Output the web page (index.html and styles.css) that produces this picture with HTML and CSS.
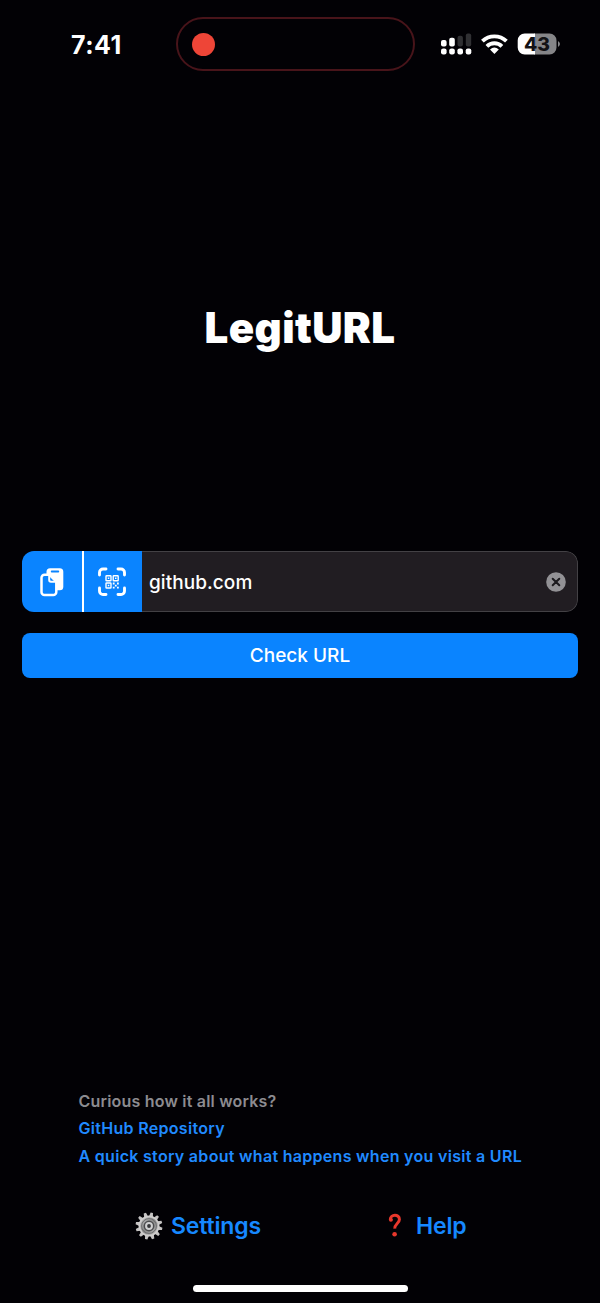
FILE: index.html
```html
<!DOCTYPE html>
<html lang="en">
<head>
<meta charset="utf-8">
<title>LegitURL</title>
<link rel="stylesheet" href="styles.css">
</head>
<body>
<div class="screen">
  <header class="status">
    <div class="time">7:41</div>
    <div class="island"><span class="record"></span></div>
    <svg class="indicators" width="128" height="28" viewBox="0 0 128 28">
      <g fill="#fff">
        <rect x="5" y="10" width="5.6" height="6.4" rx="2"/>
        <rect x="13.2" y="7.8" width="5.6" height="8.6" rx="2"/>
        <rect x="21.5" y="5.8" width="5.4" height="10.6" rx="2" fill="#303033"/>
        <rect x="29.8" y="3.5" width="5.4" height="12.9" rx="2" fill="#303033"/>
        <rect x="5" y="18.4" width="5.6" height="6" rx="2.2"/>
        <rect x="13.2" y="18.4" width="5.6" height="6" rx="2.2"/>
        <rect x="21.4" y="18.4" width="5.6" height="6" rx="2.2"/>
        <rect x="29.7" y="18.4" width="5.6" height="6" rx="2.2"/>
        <path d="M58.400 23.900l-4.400-4.400q4.400-3.800 8.800 0z"/>
      </g>
      <g fill="none" stroke="#fff" stroke-width="3.900">
        <path d="M50.900 16.300a10.800 10.800 0 0 1 15 0"/>
        <path d="M46.400 11.200a17.300 17.300 0 0 1 24 0"/>
      </g>
      <path d="M98 3.500h15.500a7 7 0 0 1 7 7v7a7 7 0 0 1-7 7H98z" fill="#858588"/>
      <path d="M99 3.500H88.700a7 7 0 0 0-7 7v7a7 7 0 0 0 7 7H99z" fill="#fff"/>
      <path d="M122 11q4 3 0 6z" fill="#858588"/>
      <text class="charge" x="88" y="20.500" textLength="26" lengthAdjust="spacingAndGlyphs">43</text>
    </svg>
  </header>
  <h1 class="title">LegitURL</h1>
  <main class="form">
    <div class="field">
      <button class="tool paste" aria-label="Paste">
        <svg width="26" height="30" viewBox="0 0 26 30">
          <rect x="7.500" y="1.200" width="16.800" height="22" rx="3.500" fill="#fff"/>
          <path d="M12.700 4.500h6.600" stroke="#0a84ff" stroke-width="1.800" stroke-linecap="round"/>
          <path d="M5.500 7.700h4.800l7 7v10.300a3 3 0 0 1-3 3H5.500a3 3 0 0 1-3-3V10.700A3 3 0 0 1 5.500 7.700z" fill="#0a84ff" stroke="#fff" stroke-width="2.500"/>
          <path d="M10.200 8v5a1.800 1.800 0 0 0 1.800 1.800h5" fill="none" stroke="#fff" stroke-width="2"/>
        </svg>
      </button>
      <button class="tool scan" aria-label="Scan QR code">
        <svg width="30" height="30" viewBox="0 0 30 30" fill="none" stroke="#fff">
          <path d="M2.500 8V5.500a3.500 3.500 0 0 1 3.500-3.500H9M21 2h3a3.500 3.500 0 0 1 3.500 3.500V8M27.500 21v3a3.500 3.500 0 0 1-3.500 3.500H21M9 27.500H6a3.500 3.500 0 0 1-3.500-3.500V21" stroke-width="2.900" stroke-linecap="round"/>
          <g stroke-width="1.400"><rect x="9" y="8.800" width="5" height="5" rx=".6"/><rect x="16.200" y="8.800" width="5" height="5" rx=".6"/><rect x="9" y="16" width="5" height="5" rx=".6"/></g>
          <g fill="#fff" stroke="none"><path d="M10.800 10.600h1.500v1.500h-1.500zM18 10.600h1.500v1.500H18zM10.800 17.800h1.500v1.500h-1.500zM15.800 15.600h1.800v1.800h-1.800zM20 15.600h1.800v1.800H20zM17.900 17.700h1.800v1.800h-1.800zM15.800 19.800h1.800v1.800h-1.800zM20 19.800h1.800v1.800H20z"/></g>
        </svg>
      </button>
      <div class="entry">
        <span class="url">github.com</span>
        <svg class="clear" width="20" height="20" viewBox="0 0 20 20"><circle cx="10" cy="10" r="9.800" fill="#929195"/><path d="M6.700 6.700l6.600 6.600M13.300 6.700l-6.600 6.600" stroke="#1c1a1e" stroke-width="2" stroke-linecap="round"/></svg>
      </div>
    </div>
    <button class="check">Check URL</button>
  </main>
  <section class="about">
    <p class="question">Curious how it all works?</p>
    <a class="repo">GitHub Repository</a>
    <a class="story">A quick story about what happens when you visit a URL</a>
  </section>
  <nav class="nav">
    <a class="settings">
      <svg width="28" height="28" viewBox="-14 -14 28 28">
        <defs>
          <linearGradient id="metal" x1="0" y1="0" x2="1" y2="1"><stop offset="0" stop-color="#c8c8c8"/><stop offset=".5" stop-color="#888"/><stop offset="1" stop-color="#c2c2c2"/></linearGradient>
          <path id="tooth" d="M-2-9.500l.8-4h2.400l.8 4z"/>
        </defs>
        <g fill="#c5c3c3" transform="rotate(12)"><use href="#tooth"/><use href="#tooth" transform="rotate(30)"/><use href="#tooth" transform="rotate(60)"/><use href="#tooth" transform="rotate(90)"/><use href="#tooth" transform="rotate(120)"/><use href="#tooth" transform="rotate(150)"/><use href="#tooth" transform="rotate(180)"/><use href="#tooth" transform="rotate(210)"/><use href="#tooth" transform="rotate(240)"/><use href="#tooth" transform="rotate(270)"/><use href="#tooth" transform="rotate(300)"/><use href="#tooth" transform="rotate(330)"/></g>
        <circle r="9.600" fill="url(#metal)" stroke="#d0cece" stroke-width="1.800"/>
        <circle r="7.400" fill="none" stroke="#6c6c6e" stroke-width="1"/>
        <circle r="4.700" fill="#cfcfd0" stroke="#4c4c4e" stroke-width="1.500"/>
        <circle r="1.900" fill="#353538"/>
      </svg>
      <span>Settings</span>
    </a>
    <a class="help">
      <svg width="14" height="26" viewBox="0 0 14 26"><path d="M2.300 6.500C2.300 1 11.400.8 11.400 6.400c0 4-5 4.400-4.600 9.300" fill="none" stroke="#e8372c" stroke-width="3"/><circle cx="2.900" cy="6.700" r="2" fill="#e8372c"/><circle cx="6.600" cy="21.300" r="2.300" fill="#e8372c"/></svg>
      <span>Help</span>
    </a>
  </nav>
  <div class="home"></div>
</div>
</body>
</html>
```
FILE: styles.css
```css
* { box-sizing: border-box; }
body { margin: 0; background: #020105; }
button { border: 0; margin: 0; padding: 0; font: inherit; color: inherit; }
.screen {
  width: 600px;
  height: 1303px;
  display: flex;
  flex-direction: column;
  background: #020105;
  color: #fff;
  font-family: Inter, "Liberation Sans", sans-serif;
  overflow: hidden;
}
.status {
  height: 88px;
  display: grid;
  grid-template-columns: 176px 239px 1fr;
  align-items: center;
}
.time { padding: 1px 0 0 71px; font-size: 25px; font-weight: 700; line-height: 30px; letter-spacing: .5px; }
.island {
  height: 54px;
  border: 2px solid #48141a;
  border-radius: 27px;
  display: flex;
  align-items: center;
  padding-left: 13.500px;
}
.record { width: 23px; height: 23px; border-radius: 50%; background: #ee4537; }
.indicators { margin-left: 21px; width: 128px; }
.charge { font-size: 18.500px; font-weight: 800; fill: #131215; }
.title {
  margin: 214px 0 0;
  height: 52px;
  line-height: 52px;
  text-align: center;
  font-size: 42px;
  font-weight: 900;
  letter-spacing: .4px;
}
.form { margin: 197px 22px 0; display: flex; flex-direction: column; gap: 21px; }
.field { height: 61px; display: flex; border-radius: 12px; overflow: hidden; }
.tool {
  width: 58px;
  background: #0a84ff;
  display: flex;
  align-items: center;
  justify-content: center;
}
.paste { width: 62px; border-right: 2px solid #fff; }
.scan { padding-right: 2px; }
.entry {
  flex: 1;
  display: flex;
  align-items: center;
  justify-content: space-between;
  padding: 1px 11px 0 7px;
  background: #211d22;
  border: 1px solid #434145;
  border-left: 0;
  border-radius: 0 12px 12px 0;
}
.url { font-size: 19px; font-weight: 550; letter-spacing: .06px; }
.check {
  height: 45px;
  border-radius: 8px;
  background: #0a84ff;
  font-size: 19px;
  font-weight: 500;
}
.about {
  margin: 409.500px 0 0 78.500px;
  display: flex;
  flex-direction: column;
  align-items: flex-start;
  font-size: 16px;
  font-weight: 600;
  line-height: 27.700px;
  letter-spacing: .3px;
  color: #208aff;
  white-space: nowrap;
}
.question { margin: 0; color: #8c8b90; font-weight: 600; letter-spacing: .2px; }
.nav {
  margin: 41px 0 0 135px;
  height: 29px;
  display: flex;
  align-items: center;
  font-size: 23px;
  font-weight: 600;
  letter-spacing: -.15px;
  color: #1688ff;
}
.settings, .help { display: flex; align-items: center; }
.settings { gap: 8px; width: 253px; }
.help { gap: 14px; }
.home { width: 215px; height: 7px; margin: 44.500px auto 0; border-radius: 4px; background: #fff; }
```
